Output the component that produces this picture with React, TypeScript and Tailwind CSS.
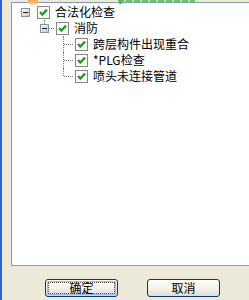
import React from 'react';

type TreeNode = {
  label: string;
  level: number;
  expander?: boolean;
  line: 'none' | 'mid' | 'last';
};

const NODES: TreeNode[] = [
  { label: '合法化检查', level: 0, expander: true, line: 'none' },
  { label: '消防', level: 1, expander: true, line: 'last' },
  { label: '跨层构件出现重合', level: 2, line: 'mid' },
  { label: '*PLG检查', level: 2, line: 'mid' },
  { label: '喷头未连接管道', level: 2, line: 'last' },
];

const INDENT = ['w-0', 'w-[19px]', 'w-[38px]'];

const FONT = { fontFamily: '"Noto Sans CJK SC", "Noto Sans", sans-serif' };

const CheckBox = () => (
  <div className="ml-[2px] w-[13px] h-[13px] border border-[#858585] bg-white flex items-center justify-center">
    <svg width="11" height="11" viewBox="0 0 11 11">
      <path d="M2 5 L4.3 7.6 L9 2.6" fill="none" stroke="#1f9b1f" strokeWidth="2.3" />
    </svg>
  </div>
);

const Expander = () => (
  <div className="absolute left-[5px] top-[4px] w-[9px] h-[9px] border border-[#7a96b4] bg-linear-to-br from-white to-[#c9c6b6] flex items-center justify-center">
    <div className="w-[5px] h-px bg-[#1a1a1a]" />
  </div>
);

const TreeRow = ({ node }: { node: TreeNode }) => (
  <div className="flex items-center h-[16px]">
    <div className={INDENT[node.level]} />
    <div className="relative w-[19px] h-[16px] shrink-0">
      {node.line !== 'none' && (
        <>
          <div
            className={`absolute left-[9px] top-0 border-l border-dotted border-[#7c7c7c] ${
              node.line === 'last' ? 'h-[8px]' : 'h-[16px]'
            }`}
          />
          <div className="absolute left-[10px] top-[8px] w-[9px] border-t border-dotted border-[#7c7c7c]" />
        </>
      )}
      {node.expander && <Expander />}
    </div>
    <div className="w-[16px] shrink-0 flex items-center">
      <CheckBox />
    </div>
    <span className="ml-[4px] text-[12px] leading-[16px] text-black whitespace-nowrap" style={FONT}>
      {node.label}
    </span>
  </div>
);

const XpButton = ({ label, isDefault }: { label: string; isDefault?: boolean }) => (
  <button className="w-[73px] h-[18px] rounded-[3px] border border-[#003c74] bg-linear-to-b from-white via-[#f3f2ec] to-[#dedcd0] p-0 flex">
    <div
      className={`flex-1 m-[1px] rounded-[2px] flex items-center justify-center ${
        isDefault ? 'border border-[#9fb6e8]' : ''
      }`}
    >
      <div
        className={`flex-1 h-full flex items-center justify-center text-[12px] leading-none text-black ${
          isDefault ? 'border border-dotted border-[#5a4a40]' : ''
        }`}
        style={FONT}
      >
        {label}
      </div>
    </div>
  </button>
);

export default function App() {
  return (
    <div className="relative w-[249px] h-[300px] bg-[#ece9d8] flex overflow-hidden">
      <div className="w-[2px] h-full bg-[#2f62d6]" />
      <div className="flex-1 flex flex-col pt-[2px] pl-[9px]">
        <div className="h-[264px] border-l border-t border-b border-[#7f9db9] bg-white pt-[1px] pl-[4px] overflow-hidden">
          {NODES.map((n) => (
            <TreeRow key={n.label} node={n} />
          ))}
        </div>
        <div className="flex mt-[13px] ml-[34px] gap-[29px]">
          <XpButton label="确定" isDefault />
          <XpButton label="取消" />
        </div>
      </div>

      {/* clipped bits of whatever sits above */}
      <div className="absolute left-[28px] top-0 w-[10px] h-[5px] rounded-b-[3px] bg-linear-to-b from-[#f59a45] to-[#fbd3a8] opacity-90" />
      <div className="absolute left-[118px] top-0 w-[77px] h-[2px] bg-[repeating-linear-gradient(90deg,#6cc46c_0_6px,#b9e2b0_6px_8px)]" />
      <div className="absolute left-[119px] top-0 w-[3px] h-[4px] bg-[#5bb35b]" />
    </div>
  );
}
